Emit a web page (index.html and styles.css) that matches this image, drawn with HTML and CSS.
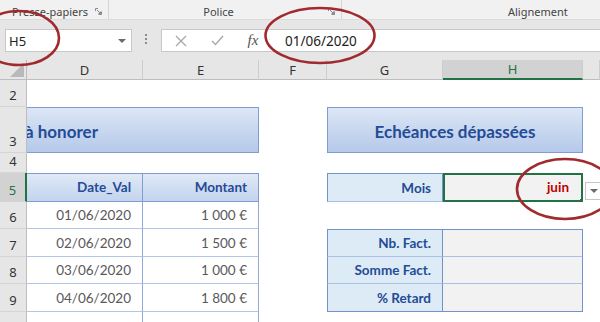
FILE: index.html
```html
<!DOCTYPE html>
<html lang="fr">
<head>
    <meta charset="UTF-8">
    <title>Echéances dépassées</title>
    <link rel="stylesheet" href="styles.css">
</head>
<body>
<div class="app">

    <div class="ribbon-groups">
        <div class="group group-clipboard">
            <span class="group-label">Presse-papiers</span>
            <svg class="launcher" width="7" height="7" viewBox="0 0 7 7">
                <path d="M0.5 3V0.5H3M6.5 3.5V6.5H3.5M2 2L5.5 5.5M5.5 3.5V5.5H3.5" fill="none" stroke="#8a8a8a" stroke-width="1"/>
            </svg>
        </div>
        <div class="group group-font">
            <span class="group-label">Police</span>
            <svg class="launcher" width="7" height="7" viewBox="0 0 7 7">
                <path d="M0.5 3V0.5H3M6.5 3.5V6.5H3.5M2 2L5.5 5.5M5.5 3.5V5.5H3.5" fill="none" stroke="#8a8a8a" stroke-width="1"/>
            </svg>
        </div>
        <div class="group group-align">
            <span class="group-label">Alignement</span>
        </div>
    </div>

    <div class="formula-bar">
        <div class="name-box">
            <span>H5</span>
            <span class="caret"></span>
        </div>
        <div class="grip"><i></i><i></i><i></i></div>
        <div class="formula-input">
            <span class="fb-btn">
                <svg width="12" height="12" viewBox="0 0 12 12">
                    <path d="M1 1L11 11M11 1L1 11" stroke="#a8a8a8" stroke-width="1.3" fill="none"/>
                </svg>
            </span>
            <span class="fb-btn">
                <svg width="13" height="11" viewBox="0 0 13 11">
                    <path d="M1 6L4.5 9.5L12 1" stroke="#a8a8a8" stroke-width="1.4" fill="none"/>
                </svg>
            </span>
            <span class="fb-btn fx">fx</span>
            <span class="formula-text">01/06/2020</span>
        </div>
    </div>

    <div class="sheet">
        <!-- column headers -->
        <div class="corner"><span class="corner-tri"></span></div>
        <div class="col-head">D</div>
        <div class="col-head">E</div>
        <div class="col-head">F</div>
        <div class="col-head">G</div>
        <div class="col-head active">H</div>
        <div class="col-head"></div>

        <!-- row 2 -->
        <div class="row-head">2</div>
        <div class="blank span-6"></div>

        <!-- row 3 -->
        <div class="row-head">3</div>
        <div class="title title-clip"><span>à honorer</span></div>
        <div class="blank"></div>
        <div class="title">Echéances dépassées</div>
        <div class="blank"></div>

        <!-- row 4 -->
        <div class="row-head">4</div>
        <div class="blank span-6"></div>

        <!-- row 5 -->
        <div class="row-head active">5</div>
        <div class="cell th">Date_Val</div>
        <div class="cell th">Montant</div>
        <div class="blank"></div>
        <div class="cell label label-top">Mois</div>
        <div class="cell current">juin</div>
        <div class="dropdown-cell">
            <span class="dropdown"><span class="dropdown-arrow"></span></span>
        </div>

        <!-- row 6 -->
        <div class="row-head">6</div>
        <div class="cell td">01/06/2020</div>
        <div class="cell td">1 000 €</div>
        <div class="blank span-4"></div>

        <!-- row 7 -->
        <div class="row-head">7</div>
        <div class="cell td">02/06/2020</div>
        <div class="cell td">1 500 €</div>
        <div class="blank"></div>
        <div class="cell label label-top">Nb. Fact.</div>
        <div class="cell value value-top"></div>
        <div class="blank"></div>

        <!-- row 8 -->
        <div class="row-head">8</div>
        <div class="cell td">03/06/2020</div>
        <div class="cell td">1 000 €</div>
        <div class="blank"></div>
        <div class="cell label">Somme Fact.</div>
        <div class="cell value"></div>
        <div class="blank"></div>

        <!-- row 9 -->
        <div class="row-head">9</div>
        <div class="cell td">04/06/2020</div>
        <div class="cell td">1 800 €</div>
        <div class="blank"></div>
        <div class="cell label label-bottom">% Retard</div>
        <div class="cell value value-bottom"></div>
        <div class="blank"></div>

        <!-- row 10 -->
        <div class="row-head last">10</div>
        <div class="cell td last">05/06/2020</div>
        <div class="cell td last">1 200 €</div>
        <div class="blank span-4"></div>
    </div>

    <svg class="marks" width="600" height="322" viewBox="0 0 600 322">
        <ellipse cx="19" cy="38" rx="40" ry="27" />
        <ellipse cx="320" cy="35.5" rx="54.5" ry="27.5" />
        <ellipse cx="565" cy="189" rx="48" ry="30" />
    </svg>
</div>
</body>
</html>
```

FILE: styles.css
```css
body {
    margin: 0;
    padding: 0;
    background-color: #fff;
    font-family: "Noto Sans", "Open Sans", sans-serif;
}
.app {
    position: relative;
    width: 600px;
    height: 322px;
    overflow: hidden;
}

/* ribbon group captions */
.ribbon-groups {
    display: flex;
    height: 19px;
    background-color: #f1f1f1;
    border-bottom: 1px solid #dcdcdc;
    font-size: 11px;
    color: #444;
}
.group {
    display: flex;
    align-items: center;
    box-sizing: border-box;
    padding-top: 3px;
    border-right: 1px solid #d6d6d6;
    white-space: nowrap;
}
.group-clipboard {
    width: 109px;
    padding-left: 12px;
    padding-right: 6px;
}
.group-clipboard .launcher {
    margin-left: auto;
}
.group-font {
    width: 233px;
    padding-right: 6px;
}
.group-font .group-label {
    flex: 1;
    text-align: center;
}
.group-align {
    flex: 1;
    padding-left: 166px;
    border-right: none;
}
.launcher {
    display: block;
}

/* formula bar */
.formula-bar {
    display: flex;
    align-items: flex-start;
    height: 40px;
    padding-top: 9px;
    box-sizing: border-box;
    background-color: #e6e6e6;
}
.name-box {
    display: flex;
    align-items: center;
    justify-content: space-between;
    box-sizing: border-box;
    width: 127px;
    height: 23px;
    margin-left: 5px;
    padding: 0 5px 0 3px;
    background-color: #fff;
    border: 1px solid #c8c8c8;
    font-size: 13px;
    color: #222;
}
.caret {
    width: 0;
    height: 0;
    border-left: 4px solid transparent;
    border-right: 4px solid transparent;
    border-top: 4px solid #6a6a6a;
}
.grip {
    display: flex;
    flex-direction: column;
    gap: 2px;
    margin: 5px 0 0 13px;
}
.grip i {
    display: block;
    width: 2px;
    height: 2px;
    background-color: #8c8c8c;
}
.formula-input {
    display: flex;
    align-items: center;
    flex: 1;
    box-sizing: border-box;
    height: 23px;
    margin-left: 14px;
    padding-left: 1px;
    background-color: #fff;
    border: 1px solid #c8c8c8;
    border-right: none;
}
.fb-btn {
    display: flex;
    align-items: center;
    justify-content: center;
    width: 36px;
}
.fx {
    font-family: "Liberation Serif", serif;
    font-style: italic;
    font-size: 15px;
    color: #555;
}
.formula-text {
    margin-left: 14px;
    font-size: 13.5px;
    color: #222;
}

/* sheet */
.sheet {
    display: grid;
    grid-template-columns: 27px 116px 116px 68px 116px 140px 17px;
    grid-template-rows: 20px 27px 46px 20px 29px 27px 28px 27px 28px 28px;
    font-family: Lato, "Liberation Sans", sans-serif;
    font-size: 13.5px;
}
.corner {
    display: flex;
    justify-content: flex-end;
    align-items: flex-end;
    padding: 0 2px 2px 0;
    background-color: #e6e6e6;
    border-right: 1px solid #bdbdbd;
    border-bottom: 1px solid #bdbdbd;
}
.corner-tri {
    width: 0;
    height: 0;
    border-left: 14px solid transparent;
    border-bottom: 14px solid #b9b9b9;
}
.col-head {
    display: flex;
    align-items: center;
    justify-content: center;
    background-color: #e6e6e6;
    border-right: 1px solid #cdcdcd;
    border-bottom: 1px solid #bdbdbd;
    font-family: "Noto Sans", sans-serif;
    font-size: 13px;
    color: #333;
}
.col-head.active {
    background-color: #d2d2d2;
    color: #217346;
    border-bottom: 2px solid #217346;
}
.row-head {
    display: flex;
    align-items: flex-end;
    justify-content: center;
    padding-bottom: 2px;
    box-sizing: border-box;
    background-color: #e6e6e6;
    border-right: 1px solid #bdbdbd;
    border-bottom: 1px solid #d5d5d5;
    font-family: "Noto Sans", sans-serif;
    font-size: 13px;
    color: #333;
}
.row-head.active {
    background-color: #d2d2d2;
    color: #217346;
    border-right: 2px solid #217346;
}
.row-head.last {
    padding-bottom: 0;
}
.span-6 {
    grid-column: span 6;
}
.span-4 {
    grid-column: span 4;
}

.title {
    grid-column: span 2;
    display: flex;
    align-items: center;
    justify-content: center;
    padding-top: 2px;
    overflow: hidden;
    white-space: nowrap;
    background: linear-gradient(#dce6f5, #b5c9ea);
    border: 1px solid #7f9dd0;
    color: #244b96;
    font-weight: 700;
    font-size: 17px;
}
.title-clip {
    justify-content: flex-start;
    border-left: none;
}
.title-clip span {
    margin-left: -2px;
}

.cell {
    display: flex;
    align-items: flex-end;
    justify-content: flex-end;
    padding: 0 11px 5px 4px;
    overflow: hidden;
    white-space: nowrap;
    color: #595959;
}
.cell.last {
    padding-bottom: 2px;
}
.th {
    padding-bottom: 6px;
    background: linear-gradient(#e0e9f6, #c3d4ee);
    border-top: 1px solid #7f9dd0;
    border-right: 1px solid #7f9dd0;
    border-bottom: 1px solid #7f9dd0;
    color: #244b96;
    font-weight: 700;
}
.td {
    border-right: 1px solid #8eaadb;
    border-bottom: 1px solid #b4c6e7;
}
.label {
    background-color: #ddebf7;
    border-left: 1px solid #7292c9;
    border-right: 1px solid #7292c9;
    border-bottom: 1px solid #a9bfe3;
    color: #244b96;
    font-weight: 700;
}
.label-top {
    border-top: 1px solid #7292c9;
}
.value {
    background-color: #f2f2f2;
    border-right: 1px solid #7292c9;
    border-bottom: 1px solid #a9bfe3;
}
.value-top {
    border-top: 1px solid #7292c9;
}
.label-bottom,
.value-bottom {
    border-bottom-color: #7292c9;
}
.current {
    position: relative;
    padding-right: 12px;
    background-color: #f2f2f2;
    border: 2px solid #217346;
    color: #c00000;
    font-weight: 700;
}
.current::after {
    content: "";
    position: absolute;
    right: -4px;
    bottom: -4px;
    width: 4px;
    height: 4px;
    background-color: #217346;
    border: 1px solid #fff;
}
.dropdown-cell {
    padding: 9px 0 0 2px;
}
.dropdown {
    display: flex;
    align-items: center;
    justify-content: center;
    box-sizing: border-box;
    width: 17px;
    height: 18px;
    background-color: #fff;
    border: 1px solid #c6c6c6;
}
.dropdown-arrow {
    width: 0;
    height: 0;
    border-left: 4px solid transparent;
    border-right: 4px solid transparent;
    border-top: 4px solid #6a6a6a;
}

/* hand drawn annotation circles */
.marks {
    position: absolute;
    top: 0;
    left: 0;
    pointer-events: none;
}
.marks ellipse {
    fill: none;
    stroke: #a02a2d;
    stroke-width: 2.6;
}
```
